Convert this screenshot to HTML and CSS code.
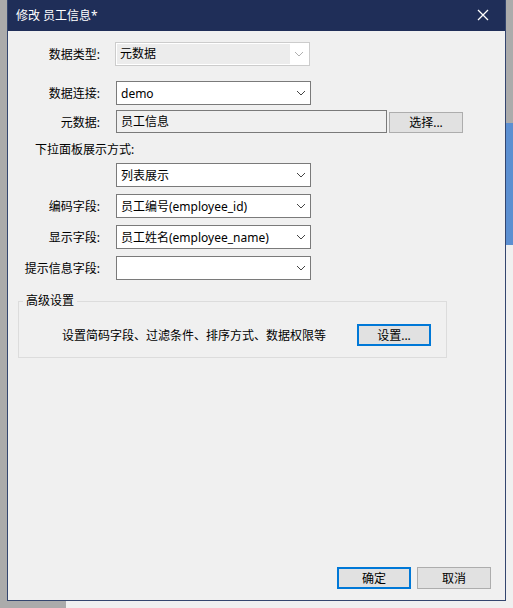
FILE: index.html
```html
<!DOCTYPE html>
<html lang="zh-CN">
  <head>
    <meta charset="UTF-8" />
    <link rel="stylesheet" href="styles.css">
    <title>修改 员工信息*</title>
  </head>
  <body>
    <div class="dialog">
      <div class="titlebar">
        <span class="title">修改 员工信息*</span>
        <svg class="close" width="12" height="12" viewBox="0 0 12 12">
          <path d="M1 1 L11 11 M11 1 L1 11" stroke="#fff" stroke-width="1.3" fill="none" />
        </svg>
      </div>

      <div class="body">
        <div class="row row-type">
          <label class="label">数据类型:</label>
          <div class="combo disabled">
            <span class="value">元数据</span>
            <span class="arrow"><svg width="10" height="6" viewBox="0 0 10 6"><path d="M1 1 L5 5 L9 1" stroke="#b0b0b0" fill="none" /></svg></span>
          </div>
        </div>

        <div class="row row-conn">
          <label class="label">数据连接:</label>
          <div class="combo">
            <span class="value">demo</span>
            <span class="arrow"><svg width="10" height="6" viewBox="0 0 10 6"><path d="M1 1 L5 5 L9 1" stroke="#444" fill="none" /></svg></span>
          </div>
        </div>

        <div class="row row-meta">
          <label class="label">元数据:</label>
          <div class="textbox">员工信息</div>
          <button class="btn btn-pick">选择...</button>
        </div>

        <div class="sub-label">下拉面板展示方式:</div>

        <div class="row row-mode">
          <label class="label"></label>
          <div class="combo">
            <span class="value">列表展示</span>
            <span class="arrow"><svg width="10" height="6" viewBox="0 0 10 6"><path d="M1 1 L5 5 L9 1" stroke="#444" fill="none" /></svg></span>
          </div>
        </div>

        <div class="row row-field">
          <label class="label">编码字段:</label>
          <div class="combo">
            <span class="value">员工编号(employee_id)</span>
            <span class="arrow"><svg width="10" height="6" viewBox="0 0 10 6"><path d="M1 1 L5 5 L9 1" stroke="#444" fill="none" /></svg></span>
          </div>
        </div>

        <div class="row row-field">
          <label class="label">显示字段:</label>
          <div class="combo">
            <span class="value">员工姓名(employee_name)</span>
            <span class="arrow"><svg width="10" height="6" viewBox="0 0 10 6"><path d="M1 1 L5 5 L9 1" stroke="#444" fill="none" /></svg></span>
          </div>
        </div>

        <div class="row row-field">
          <label class="label">提示信息字段:</label>
          <div class="combo">
            <span class="value"></span>
            <span class="arrow"><svg width="10" height="6" viewBox="0 0 10 6"><path d="M1 1 L5 5 L9 1" stroke="#444" fill="none" /></svg></span>
          </div>
        </div>

        <fieldset class="group">
          <legend>高级设置</legend>
          <div class="group-row">
            <span class="group-text">设置简码字段、过滤条件、排序方式、数据权限等</span>
            <button class="btn focused">设置...</button>
          </div>
        </fieldset>

        <div class="footer">
          <button class="btn focused">确定</button>
          <button class="btn">取消</button>
        </div>
      </div>
    </div>
  </body>
</html>
```

FILE: styles.css
```css
html,
body {
  margin: 0;
  padding: 0;
  width: 513px;
  height: 608px;
  overflow: hidden;
}

body {
  font-family: "Noto Sans", "Noto Sans CJK SC", sans-serif;
  font-size: 12px;
  color: #000;
  background-color: #f0f0f0;
  background-image:
    linear-gradient(#ababab, #ababab),
    linear-gradient(#ababab, #ababab),
    linear-gradient(#ababab, #ababab),
    linear-gradient(#5c8fd1, #5c8fd1);
  background-repeat: no-repeat;
  background-size: 7px 608px, 66px 8px, 7px 123px, 7px 122px;
  background-position: 0 0, 0 601px, 506px 0, 506px 123px;
}

.dialog {
  margin-left: 7px;
  width: 497px;
  height: 600px;
  border: 1px solid #34466f;
  border-top: none;
  background: #f0f0f0;
  display: flex;
  flex-direction: column;
}

.titlebar {
  height: 31px;
  background: #1f2e58;
  color: #fff;
  display: flex;
  align-items: center;
  justify-content: space-between;
  padding: 0 16px 0 8px;
  flex-shrink: 0;
}

.title {
  font-size: 12px;
  padding-bottom: 1px;
}

.close {
  display: block;
  margin-top: -1px;
}

.body {
  flex: 1;
  display: flex;
  flex-direction: column;
}

.row {
  display: flex;
  align-items: center;
}

.label {
  width: 92px;
  text-align: right;
  margin-right: 16px;
  flex-shrink: 0;
}

.row-type {
  margin-top: 11px;
}

.row-conn {
  margin-top: 15px;
}

.row-meta {
  margin-top: 5px;
}

.row-mode {
  margin-top: 4px;
}

.row-field {
  margin-top: 7px;
}

.combo {
  width: 193px;
  height: 22px;
  border: 1px solid #7a7a7a;
  background: #fff;
  display: flex;
  align-items: center;
  justify-content: space-between;
}

.combo.disabled {
  margin-left: -1px;
  border-color: #cccccc;
  background: #fff;
  padding: 1px;
  height: 20px;
  width: 191px;
}

.combo.disabled .value {
  background: #ececec;
  height: 20px;
  line-height: 20px;
  flex: 1;
  padding-left: 3px;
}

.value {
  padding-left: 4px;
  white-space: nowrap;
}

.arrow {
  width: 18px;
  display: flex;
  justify-content: center;
  flex-shrink: 0;
}

.arrow svg {
  display: block;
}

.textbox {
  width: 265px;
  height: 21px;
  line-height: 21px;
  border: 1px solid #7a7a7a;
  background: #f0f0f0;
  padding-left: 4px;
}

.btn {
  width: 74px;
  height: 22px;
  padding: 0;
  border: 1px solid #adadad;
  background: #e1e1e1;
  font-family: "Noto Sans", "Noto Sans CJK SC", sans-serif;
  font-size: 12px;
  color: #000;
}

.btn.focused {
  border: 2px solid #0078d7;
}

.btn-pick {
  margin-left: 2px;
  height: 21px;
  margin-top: 1px;
}

.sub-label {
  margin: 7px 0 0 27px;
  height: 19px;
  line-height: 19px;
}

.group {
  margin: 14px 0 0 10px;
  width: 429px;
  padding: 0;
  border: 1px solid #dcdcdc;
  box-sizing: border-box;
  height: 64px;
}

.group legend {
  margin-left: 4px;
  padding: 0 3px 0 3px;
  line-height: 14px;
}

.group-row {
  display: flex;
  align-items: center;
  margin-top: 16px;
}

.group-text {
  margin-left: 43px;
  width: 295px;
  margin-right: 0;
}

.group-row .btn {
  margin-left: 0;
}

.footer {
  margin-top: auto;
  display: flex;
  justify-content: flex-end;
  gap: 6px;
  padding: 0 14px 11px 0;
}
```
